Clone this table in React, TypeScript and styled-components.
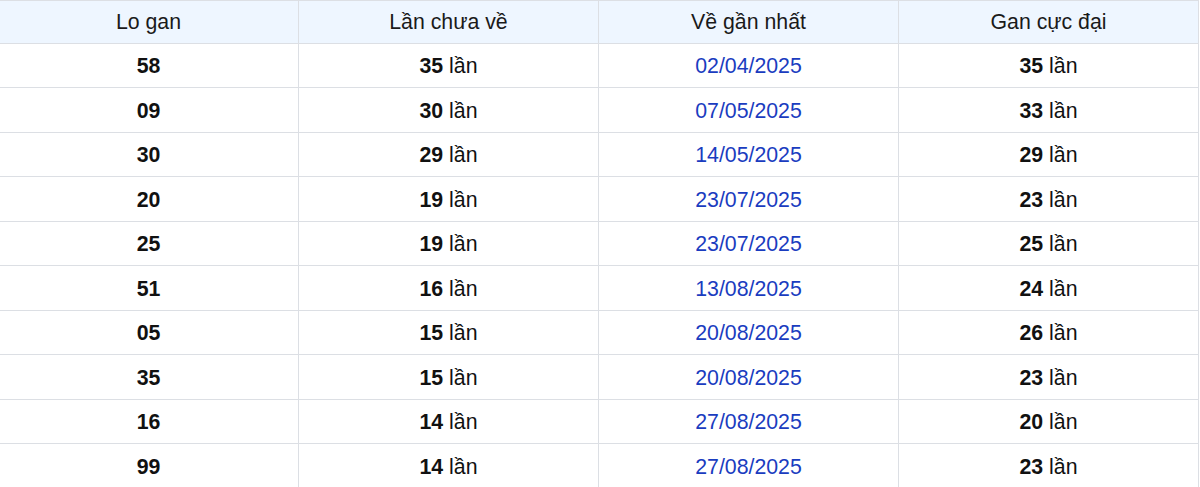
import React from 'react'
import styled, { createGlobalStyle } from 'styled-components'

type Row = {
  lo: string
  absent: number
  last: string
  max: number
}

const rows: Row[] = [
  { lo: '58', absent: 35, last: '02/04/2025', max: 35 },
  { lo: '09', absent: 30, last: '07/05/2025', max: 33 },
  { lo: '30', absent: 29, last: '14/05/2025', max: 29 },
  { lo: '20', absent: 19, last: '23/07/2025', max: 23 },
  { lo: '25', absent: 19, last: '23/07/2025', max: 25 },
  { lo: '51', absent: 16, last: '13/08/2025', max: 24 },
  { lo: '05', absent: 15, last: '20/08/2025', max: 26 },
  { lo: '35', absent: 15, last: '20/08/2025', max: 23 },
  { lo: '16', absent: 14, last: '27/08/2025', max: 20 },
  { lo: '99', absent: 14, last: '27/08/2025', max: 23 },
]

const Times = ({ n }: { n: number }) => (
  <>
    <b>{n}</b> lần
  </>
)

const App = () => {
  return (
    <>
      <GlobalStyle />
      <Wrapper>
        <Table>
          <thead>
            <tr>
              <Th>Lo gan</Th>
              <Th>Lần chưa về</Th>
              <Th>Về gần nhất</Th>
              <Th>Gan cực đại</Th>
            </tr>
          </thead>
          <tbody>
            {rows.map((r) => (
              <Tr key={r.lo}>
                <Td>
                  <b>{r.lo}</b>
                </Td>
                <Td>
                  <Times n={r.absent} />
                </Td>
                <Td $date>{r.last}</Td>
                <Td>
                  <Times n={r.max} />
                </Td>
              </Tr>
            ))}
          </tbody>
        </Table>
      </Wrapper>
    </>
  )
}

const GlobalStyle = createGlobalStyle`
  html, body {
    margin: 0;
    padding: 0;
    background: #fff;
    overflow: hidden;
  }
`

const Wrapper = styled.div`
  width: 1200px;
  overflow: hidden;
`

const Table = styled.table`
  margin-left: -2px;
  width: 1201px;
  border-collapse: collapse;
  table-layout: fixed;

  font-family: 'Liberation Sans', Arial, sans-serif;
  font-size: 21.3px;
  color: #111;
`

const Th = styled.th`
  height: 42.5px;
  padding: 2px 0 0;
  box-sizing: border-box;

  background: #eef6ff;
  border: 1px solid #dcdfe4;

  font-weight: normal;
  text-align: center;
  color: #1a1a1a;
`

const Tr = styled.tr`
  height: 44.5px;
`

const Td = styled.td<{ $date?: boolean }>`
  padding: 3px 0 0;

  border: 1px solid #dcdfe4;

  text-align: center;
  color: ${(p) => (p.$date ? '#1a3cbf' : '#111')};

  b {
    font-weight: bold;
  }
`

export default App
